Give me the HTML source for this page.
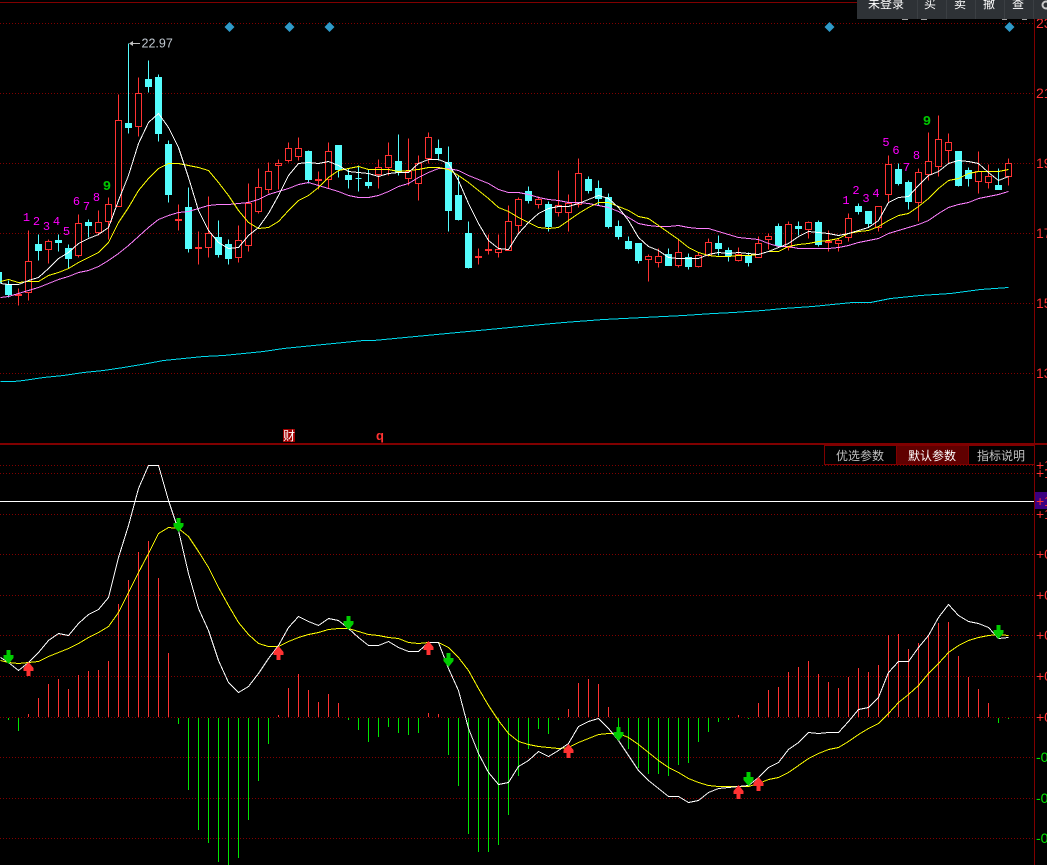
<!DOCTYPE html>
<html><head><meta charset="utf-8"><style>
html,body{margin:0;padding:0;background:#000;width:1047px;height:865px;overflow:hidden}
svg{display:block}
text{white-space:pre}
.d{font:12px "Liberation Mono",monospace;fill:#f0f;text-anchor:middle}
.n{font:bold 14px "Liberation Mono",monospace;fill:#00c800;text-anchor:middle}
.a{font:14px "Liberation Sans",sans-serif;fill:#ff3232}
.g{font:14px "Liberation Sans",sans-serif;fill:#00e600}
.c{font:12px "WenQuanYi Zen Hei","Noto Sans CJK SC",sans-serif}
</style></head><body>
<svg width="1047" height="865" viewBox="0 0 1047 865" xmlns="http://www.w3.org/2000/svg">
<rect width="1047" height="865" fill="#000"/>
<g fill="none" stroke="#800000" stroke-dasharray="1 2" shape-rendering="crispEdges">
<path d="M0 23.5H1034M0 93.5H1034M0 163.5H1034M0 233.5H1034M0 303.5H1034M0 373.5H1034M0 465.5H1034M0 473.5H1034M0 514.5H1034M0 554.5H1034M0 595.5H1034M0 635.5H1034M0 676.5H1034M0 717.5H1034M0 757.5H1034M0 798.5H1034M0 838.5H1034"/>
</g>
<g fill="none" stroke="#800000" shape-rendering="crispEdges">
<path d="M0 2.5H1047M1034.5 0V865"/>
<path d="M0 444H1047" stroke-width="2"/>
</g>
<g fill="#2f9ac8"><path d="M229.5 22l5 5-5 5-5-5z"/><path d="M289.5 22l5 5-5 5-5-5z"/><path d="M329.5 22l5 5-5 5-5-5z"/><path d="M829.5 22l5 5-5 5-5-5z"/><path d="M1009.5 22l5 5-5 5-5-5z"/></g>

<g transform="translate(.5 .5)" shape-rendering="crispEdges">
<path fill="#000" stroke="#ff3232" d="M18 288V305M15 294h6v1h-6zM28 230V261M28 292V300M25 261h6v31h-6zM48 239V241M48 249V263M45 241h6v8h-6zM78 214V223M78 255V257M75 223h6v32h-6zM98 210V222M98 232V235M95 222h6v10h-6zM108 197V204M108 221V239M105 204h6v17h-6zM118 94V120M115 120h6v86h-6zM138 77V93M138 126V136M135 93h6v33h-6zM178 204V230M175 219h6v1h-6zM198 231V264M195 247h6v1h-6zM208 196V233M208 247V257M205 233h6v14h-6zM238 225V240M238 257V262M235 240h6v17h-6zM248 183V203M248 245V251M245 203h6v42h-6zM258 168V187M258 211V213M255 187h6v24h-6zM268 162V171M268 189V193M265 171h6v18h-6zM278 159V163M278 165V189M275 163h6v2h-6zM288 142V148M288 160V162M285 148h6v12h-6zM298 137V148M298 156V160M295 148h6v8h-6zM318 171V189M315 179h6v1h-6zM328 142V151M328 179V188M325 151h6v28h-6zM378 159V167M378 174V188M375 167h6v7h-6zM388 142V155M388 167V175M385 155h6v12h-6zM408 138V171M408 178V185M405 171h6v7h-6zM418 155V163M418 183V200M415 163h6v20h-6zM428 132V137M428 158V163M425 137h6v21h-6zM478 248V264M475 256h6v1h-6zM488 234V254M485 249h6v1h-6zM498 234V249M498 252V257M495 249h6v3h-6zM508 205V221M505 221h6v29h-6zM518 197V199M518 225V232M515 199h6v26h-6zM538 196V199M538 204V208M535 199h6v5h-6zM558 170V205M558 212V216M555 205h6v7h-6zM568 194V203M568 212V231M565 203h6v9h-6zM578 158V173M578 204V207M575 173h6v31h-6zM648 254V256M648 259V281M645 256h6v3h-6zM658 248V256M658 262V267M655 256h6v6h-6zM678 239V252M678 265V267M675 252h6v13h-6zM698 252V255M698 266V267M695 255h6v11h-6zM708 238V242M708 255V256M705 242h6v13h-6zM738 247V254M738 260V261M735 254h6v6h-6zM758 236V243M755 243h6v14h-6zM768 233V236M768 239V249M765 236h6v3h-6zM788 221V224M788 247V250M785 224h6v23h-6zM808 221V222M808 229V238M805 222h6v7h-6zM828 230V251M825 241h6v1h-6zM838 238V240M838 243V251M835 240h6v3h-6zM848 213V218M848 237V241M845 218h6v19h-6zM878 227V231M875 206h6v21h-6zM888 155V164M888 194V202M885 164h6v30h-6zM918 168V172M918 202V221M915 172h6v30h-6zM928 132V161M928 174V180M925 161h6v13h-6zM938 115V139M938 166V176M935 139h6v27h-6zM948 133V142M948 150V163M945 142h6v8h-6zM978 151V171M978 181V193M975 171h6v10h-6zM988 164V176M988 182V188M985 176h6v6h-6zM1008 158V163M1008 176V185M1005 163h6v13h-6z"/>
<path fill="#54fcfc" stroke="#54fcfc" d="M0 272h1v10h-1zM8 280V297M5 284h6v10h-6zM38 234V260M35 244h6v6h-6zM58 234V251M55 240h6v2h-6zM68 244V268M65 248h6v10h-6zM88 219V237M85 222h6v3h-6zM128 43V133M125 123h6v4h-6zM148 60V92M145 79h6v7h-6zM158 74V141M155 77h6v56h-6zM168 140V202M165 144h6v50h-6zM188 187V252M185 207h6v41h-6zM218 220V257M215 237h6v17h-6zM228 239V264M225 244h6v14h-6zM308 150V183M305 151h6v28h-6zM338 145V177M335 145h6v24h-6zM348 168V188M345 175h6v4h-6zM358 165V191M355 178h6v0h-6zM368 169V188M365 182h6v3h-6zM398 134V175M395 161h6v11h-6zM438 139V160M435 148h6v5h-6zM448 146V231M445 162h6v48h-6zM458 175V220M455 195h6v24h-6zM468 221V268M465 233h6v34h-6zM528 186V203M525 191h6v9h-6zM548 201V231M545 204h6v22h-6zM588 176V193M585 179h6v11h-6zM598 180V205M595 188h6v10h-6zM608 193V228M605 197h6v29h-6zM618 220V239M615 226h6v10h-6zM628 236V249M625 241h6v7h-6zM638 243V263M635 243h6v17h-6zM668 248V265M665 254h6v11h-6zM688 253V269M685 257h6v9h-6zM718 235V255M715 243h6v5h-6zM728 247V261M725 250h6v5h-6zM748 252V266M745 255h6v7h-6zM778 223V245M775 226h6v19h-6zM798 221V235M795 226h6v2h-6zM818 220V246M815 222h6v22h-6zM858 203V214M855 206h6v5h-6zM868 211V227M865 211h6v12h-6zM898 163V185M895 169h6v14h-6zM908 180V209M905 182h6v19h-6zM958 151V186M955 151h6v34h-6zM968 167V186M965 170h6v8h-6zM998 168V189M995 185h6v4h-6z"/>
</g>

<g transform="translate(.5 .5)" fill="none" shape-rendering="crispEdges">
<polyline stroke="#ff80ff" points="0,297 8,296 18,293 28,290 38,287 48,283 58,279 68,276 78,272 88,270 98,266 108,260 118,253 128,245 138,236 148,227 158,219 168,215 178,212 188,211 198,208 208,205 218,204 228,204 238,203 248,202 258,199 268,194 278,191 288,188 298,184 308,182 318,185 328,188 338,191 348,195 358,197 368,197 378,195 388,191 398,186 408,183 418,177 428,172 438,168 448,168 458,170 468,175 478,179 488,183 498,189 508,192 518,192 528,194 538,197 548,199 558,200 568,202 578,202 588,203 598,205 608,207 618,211 628,217 638,223 648,225 658,226 668,226 678,225 688,227 698,228 708,228 718,231 728,234 738,237 748,238 758,239 768,243 778,246 788,246 798,248 808,248 818,248 828,248 838,247 848,245 858,242 868,240 878,238 888,233 898,230 908,227 918,224 928,220 938,213 948,207 958,204 968,202 978,198 988,196 998,194 1008,191"/>
<polyline stroke="#ffff00" points="0,281 8,279 18,282 28,281 38,281 48,275 58,272 68,268 78,262 88,257 98,252 108,242 118,222 128,207 138,190 148,178 158,168 168,163 178,163 188,165 198,167 208,170 218,182 228,195 238,210 248,222 258,228 268,227 278,221 288,210 298,200 308,195 318,187 328,177 338,170 348,168 358,166 368,169 378,169 388,169 398,171 408,170 418,169 428,167 438,167 448,169 458,175 468,182 478,190 488,198 498,207 508,211 518,217 528,222 538,227 548,228 558,227 568,220 578,213 588,207 598,202 608,202 618,206 628,210 638,216 648,218 658,225 668,232 678,239 688,247 698,252 708,255 718,256 728,256 738,255 748,255 758,254 768,251 778,251 788,246 798,244 808,243 818,241 828,240 838,238 848,233 858,231 868,230 878,226 888,220 898,215 908,213 918,206 928,198 938,188 948,180 958,178 968,173 978,171 988,171 998,171 1008,169"/>
<polyline stroke="#fff" points="0,283 8,284 18,284 28,280 38,277 48,268 58,258 68,252 78,243 88,238 98,234 108,227 118,200 128,175 138,143 148,122 158,113 168,127 178,147 188,177 198,210 208,230 218,242 228,248 238,247 248,235 258,227 268,213 278,195 288,175 298,163 308,162 318,163 328,161 338,165 348,171 358,172 368,173 378,176 388,173 398,172 408,172 418,163 428,159 438,159 448,163 458,180 468,203 478,223 488,240 498,248 508,249 518,233 528,222 538,213 548,208 558,206 568,206 578,203 588,199 598,195 608,198 618,207 628,220 638,237 648,246 658,250 668,257 678,258 688,258 698,258 708,254 718,252 728,253 738,252 748,253 758,254 768,251 778,247 788,243 798,236 808,231 818,232 828,233 838,235 848,233 858,230 868,227 878,220 888,202 898,197 908,196 918,185 928,175 938,171 948,163 958,160 968,161 978,163 988,172 998,180 1008,176"/>
<polyline stroke="#00dcf0" points="0,381 13,381 23,380 43,377 63,375 83,372 103,370 123,367 147,363 163,360 183,358 203,356 223,355 243,353 263,351 283,348 303,346 323,344 343,342 363,340 373,340 520,326 563,322 603,319 643,317 683,315 713,313 733,312 762,310 783,308 812,306 832,304 852,302 870,302 890,298 920,295 950,293 980,289 1008,287"/>
</g>

<g class="d">
<text x="26.5" y="221">1</text><text x="36.5" y="225">2</text><text x="46.5" y="230">3</text><text x="56.5" y="225">4</text><text x="66.5" y="235">5</text><text x="76.5" y="205">6</text><text x="86.5" y="210">7</text><text x="96.5" y="201">8</text>
<text x="846" y="204">1</text><text x="856" y="194">2</text><text x="866" y="202">3</text><text x="876" y="197">4</text><text x="886" y="146">5</text><text x="896" y="154">6</text><text x="906.5" y="171">7</text><text x="916.5" y="159">8</text>
</g>
<text class="n" x="107" y="190">9</text>
<text class="n" x="927" y="125">9</text>

<path d="M130 43.5H140" stroke="#c0c0c0" stroke-width="1" shape-rendering="crispEdges"/>
<path d="M129 43.5l4-2.5v5z" fill="#c0c0c0"/>
<text x="141.5" y="47.5" style="font:12.5px 'Liberation Sans',sans-serif" fill="#c0c8d0">22.97</text>

<rect x="283" y="429" width="12" height="13" fill="#a00000"/>
<text class="c" x="283" y="440" fill="#fff">财</text>
<text x="376" y="440" style="font:bold 13px 'Liberation Sans',sans-serif" fill="#ff3232">q</text>

<!-- lower chart -->
<path stroke="#fff" d="M0 501.5H1034" shape-rendering="crispEdges"/>
<g transform="translate(.5 0)" shape-rendering="crispEdges">
<path stroke="#ff3232" d="M28 717V714M38 717V698M48 717V684M58 717V679M68 717V689M78 717V675M88 717V671M98 717V670M108 717V661M118 717V604M128 717V580M138 717V552M148 717V541M158 717V578M168 717V653M278 717V715M288 717V688M298 717V674M308 717V690M318 717V702M328 717V694M338 717V703M428 717V713M438 717V714M568 717V709M578 717V683M588 717V679M598 717V684M608 717V707M738 717V715M758 717V703M768 717V690M778 717V687M788 717V672M798 717V667M808 717V661M818 717V674M828 717V682M838 717V688M848 717V677M858 717V668M868 717V672M878 717V665M888 717V635M898 717V634M908 717V649M918 717V643M928 717V635M938 717V623M948 717V622M958 717V656M968 717V677M978 717V689M988 717V703"/>
<path stroke="#00e600" d="M8 718V720M18 718V731M178 718V724M188 718V790M198 718V830M208 718V843M218 718V862M228 718V865M238 718V858M248 718V820M258 718V781M268 718V744M348 718V720M358 718V730M368 718V742M378 718V737M388 718V727M398 718V733M408 718V735M418 718V733M448 718V755M458 718V786M468 718V834M478 718V852M488 718V852M498 718V845M508 718V815M518 718V776M528 718V749M538 718V729M548 718V734M558 718V720M618 718V739M628 718V749M638 718V768M648 718V774M658 718V774M668 718V776M678 718V765M688 718V763M698 718V742M708 718V732M718 718V722M728 718V720M748 718V719M998 718V723M1008 718V719"/>
</g>
<g transform="translate(.5 .5)" fill="none" shape-rendering="crispEdges">
<polyline stroke="#ffff00" points="0,660 8,662 18,663 28,662 38,661 48,656 58,652 68,648 78,643 88,637 98,632 108,626 118,612 128,592 138,572 148,553 158,533 168,527 178,528 188,536 198,551 208,567 218,587 228,605 238,622 248,634 258,643 268,646 278,646 288,641 298,637 308,634 318,632 328,629 338,628 348,628 358,631 368,634 378,635 388,637 398,638 408,642 418,643 428,642 438,642 448,647 458,657 468,670 478,688 488,705 498,720 508,733 518,741 528,744 538,746 548,747 558,748 568,747 578,742 588,738 598,734 608,733 618,733 628,737 638,744 648,752 658,760 668,767 678,772 688,778 698,782 708,785 718,786 728,786 738,786 748,786 758,783 768,779 778,777 788,772 798,765 808,758 818,753 828,749 838,747 848,741 858,734 868,728 878,723 888,713 898,702 908,694 918,685 928,673 938,663 948,652 958,645 968,640 978,637 988,635 998,634 1008,635"/>
<polyline stroke="#fff" points="0,657 8,662 18,670 28,662 38,652 48,640 58,633 68,635 78,623 88,614 98,609 108,597 118,557 128,525 138,488 148,465 158,465 168,500 178,530 188,573 198,608 208,630 218,660 228,682 238,692 248,686 258,673 268,658 278,645 288,627 298,616 308,621 318,625 328,618 338,620 348,628 358,637 368,645 378,645 388,641 398,647 408,651 418,651 428,642 438,642 448,668 458,690 468,728 478,753 488,772 498,784 508,782 518,766 528,760 538,751 548,756 558,750 568,743 578,726 588,721 598,718 608,728 618,740 628,755 638,770 648,780 658,788 668,796 678,796 688,802 698,800 708,792 718,788 728,787 738,786 748,785 758,777 768,767 778,762 788,749 798,742 808,732 818,733 828,732 838,732 848,721 858,709 868,707 878,697 888,672 898,661 908,661 918,647 928,635 938,617 948,604 958,615 968,621 978,623 988,627 998,638 1008,637"/>
</g>

<defs>
<path id="dn" d="M-2 0h4v5h3v3l-5 6-5-6v-3h3z" fill="#00cc00"/>
<path id="up" d="M0 0l5 6v3h-3v5h-4v-5h-3v-3z" fill="#ff3232"/>
</defs>
<use href="#dn" transform="translate(8.5 650)"/>
<use href="#dn" transform="translate(178.5 518)"/>
<use href="#dn" transform="translate(348.5 616)"/>
<use href="#dn" transform="translate(448.5 653)"/>
<use href="#dn" transform="translate(618.5 727)"/>
<use href="#dn" transform="translate(748.5 772)"/>
<use href="#dn" transform="translate(998.5 625)"/>
<use href="#up" transform="translate(28.5 662)"/>
<use href="#up" transform="translate(278.5 646)"/>
<use href="#up" transform="translate(428.5 641)"/>
<use href="#up" transform="translate(568.5 744)"/>
<use href="#up" transform="translate(738.5 785)"/>
<use href="#up" transform="translate(758.5 777)"/>

<!-- tabs -->
<g shape-rendering="crispEdges">
<rect x="824.5" y="445.5" width="72" height="19" fill="#000" stroke="#800000"/>
<rect x="896.5" y="445.5" width="72" height="19" fill="#600000" stroke="#800000"/>
<rect x="968.5" y="445.5" width="66" height="19" fill="#000" stroke="#800000"/>
</g>
<text class="c" x="836" y="460" fill="#c0c0c0">优选参数</text>
<text class="c" x="908" y="460" fill="#fff">默认参数</text>
<text class="c" x="977" y="460" fill="#c0c0c0">指标说明</text>

<!-- right axis -->
<rect x="1035" y="492" width="12" height="17" fill="#3c0080"/>
<g class="a">
<text class="a" x="1036" y="28">23</text><text class="a" x="1036" y="98">21</text><text class="a" x="1036" y="168">19</text><text class="a" x="1036" y="238">17</text><text class="a" x="1036" y="308">15</text><text class="a" x="1036" y="378">13</text>
<text class="a" x="1036" y="470">+1</text><text class="a" x="1036" y="478">+1</text><text class="a" x="1036" y="506">+1</text><text class="a" x="1036" y="519">+1</text>
<text class="a" x="1036" y="559">+0</text><text class="a" x="1036" y="600">+0</text><text class="a" x="1036" y="640">+0</text><text class="a" x="1036" y="681">+0</text><text class="a" x="1036" y="722">+0</text>
</g>
<text class="g" x="1036" y="762">-0</text><text class="g" x="1036" y="803">-0</text><text class="g" x="1036" y="843">-0</text>

<!-- toolbar -->
<rect x="857" y="0" width="190" height="19" fill="#2e3236"/>
<path d="M917.5 0V19M946.5 0V19M975.5 0V19M1004.5 0V19M1033.5 0V19" stroke="#3b3f43" shape-rendering="crispEdges"/>
<path d="M902 19.5h6M921 19.5h6M1002 19.5h5M1022 19.5h5" stroke="#a0a0a0" shape-rendering="crispEdges"/>
<text class="c" x="868" y="8" fill="#fff">未登录</text>
<text class="c" x="924" y="8" fill="#fff">买</text>
<text class="c" x="954" y="8" fill="#fff">卖</text>
<text class="c" x="983" y="8" fill="#fff">撤</text>
<text class="c" x="1012" y="8" fill="#fff">查</text>
<circle cx="1046" cy="5" r="3.5" fill="none" stroke="#c8c8c8" stroke-width="2"/>
</svg>
</body></html>
